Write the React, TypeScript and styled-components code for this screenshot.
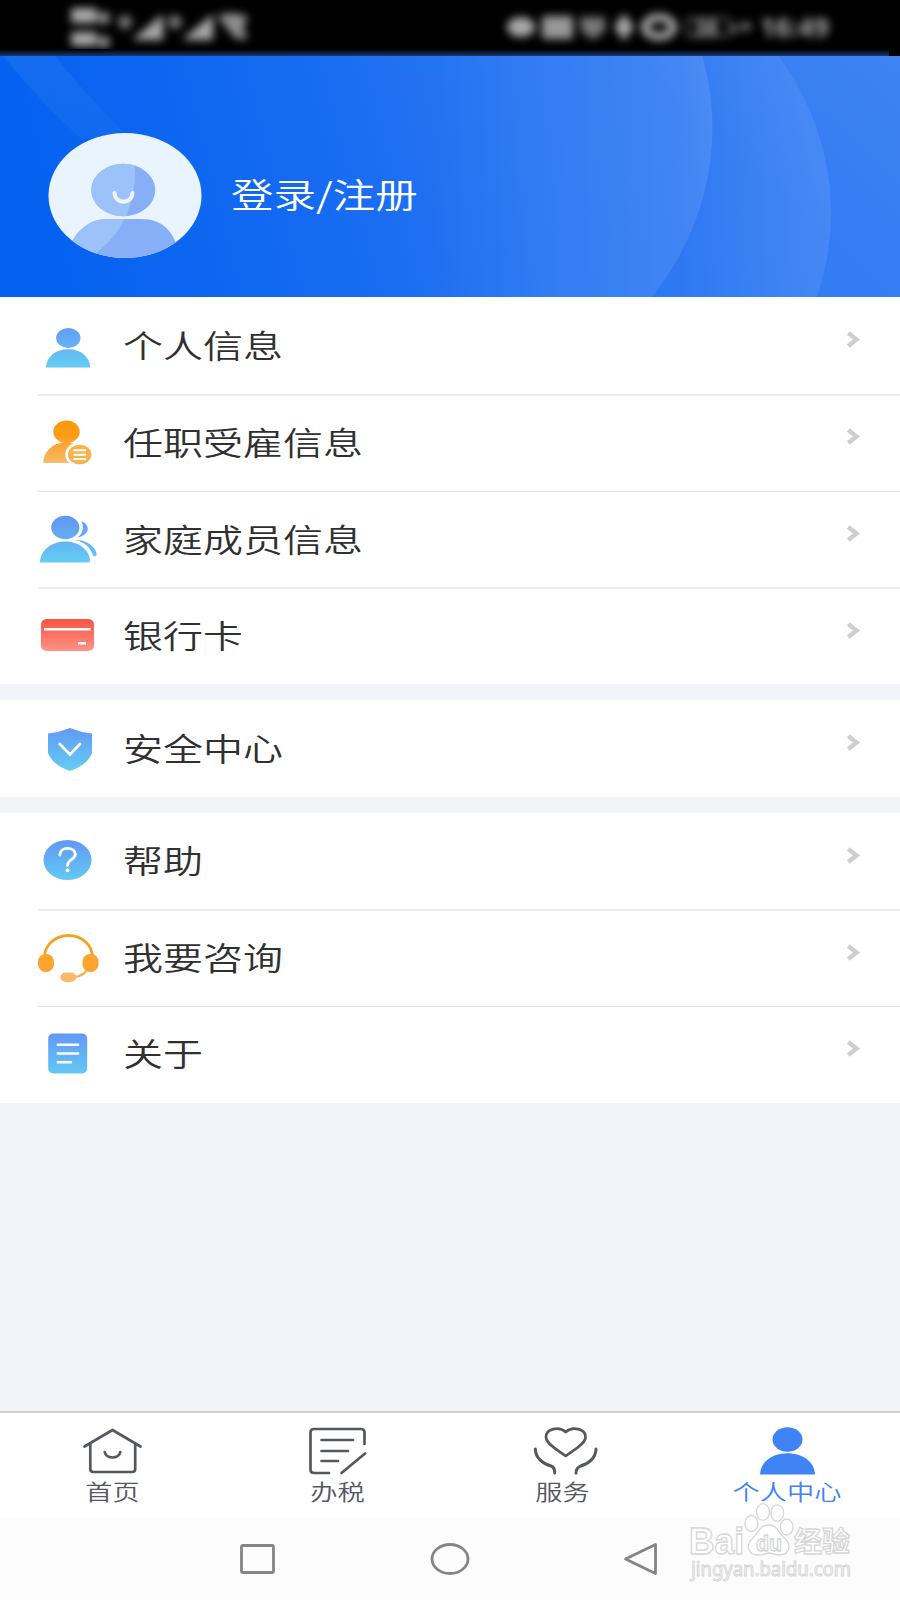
import React from 'react';
import styled, { createGlobalStyle } from 'styled-components';

const GlobalStyle = createGlobalStyle`
  * { box-sizing: border-box; }
  body {
    margin: 0;
    font-family: "Noto Sans CJK SC", "Noto Sans", sans-serif;
    font-weight: 350;
  }
  svg { display: block; flex: none; }
`;

const Screen = styled.div`
  position: relative;
  display: flex;
  flex-direction: column;
  width: 900px;
  height: 1600px;
  overflow: hidden;
  background: #f3f4f9;
`;

const StatusBar = styled.header`
  height: 56px;
  background: #000;
`;

const Hero = styled.section`
  position: relative;
  display: flex;
  align-items: flex-start;
  height: 241px;
  padding: 76px 0 0 48px;
  background: #0562f0;
`;

const HeroBackdrop = styled.svg`
  position: absolute;
  inset: 0;
`;

const Avatar = styled.svg`
  position: relative;
`;

const LoginLink = styled.a`
  position: relative;
  margin: 37px 0 0 29px;
  font-size: 34px;
  line-height: 50px;
  color: #fff;
  white-space: nowrap;
  transform: scaleX(1.25);
  transform-origin: left center;
`;

const Section = styled.section`
  margin-bottom: 16px;
  background: #fff;
`;

const Row = styled.div<{ $height: number }>`
  display: flex;
  align-items: flex-start;
  height: ${(p) => p.$height}px;
  padding-left: 35px;
`;

const Divider = styled.hr<{ $thin?: boolean }>`
  height: ${(p) => (p.$thin ? 1 : 2)}px;
  margin: 0 0 0 38px;
  border: 0;
  background: ${(p) => (p.$thin ? '#e4e4e6' : '#ededee')};
`;

const RowLabel = styled.span<{ $top: number }>`
  flex: 1;
  margin-left: 18px;
  padding-top: ${(p) => p.$top}px;
  font-size: 31.5px;
  line-height: 46px;
  color: #303030;
  white-space: nowrap;
  transform: scaleX(1.27);
  transform-origin: left center;
`;

const Chevron = styled.svg<{ $top: number }>`
  margin: ${(p) => p.$top}px 39px 0 0;
`;

const TabBar = styled.nav`
  display: grid;
  grid-template-columns: repeat(4, 1fr);
  height: 106px;
  margin-top: auto;
  border-top: 2px solid #d0d2d8;
  background: #fff;
`;

const Tab = styled.a<{ $active?: boolean }>`
  display: flex;
  flex-direction: column;
  align-items: center;
  padding-top: 11px;
  color: ${(p) => (p.$active ? '#3f83f5' : '#555763')};
`;

const TabLabel = styled.span`
  font-size: 21.5px;
  line-height: 30px;
  white-space: nowrap;
  transform: scaleX(1.265);
`;

const SystemNav = styled.footer`
  display: flex;
  align-items: center;
  gap: 152px;
  height: 83px;
  padding-left: 238px;
  background: #fcfcfc;
`;

const Watermark = styled.svg`
  position: absolute;
  left: 680px;
  top: 1495px;
`;

const Sky = 'url(#sky)';
const Amber = 'url(#amber)';

const Gradients = () => (
  <svg width="0" height="0" style={{ position: 'absolute' }}>
    <defs>
      <linearGradient id="sky" gradientUnits="userSpaceOnUse" x1="0" y1="28" x2="0" y2="70">
        <stop offset="0" stopColor="#6299f4" />
        <stop offset="1" stopColor="#63cdf4" />
      </linearGradient>
      <linearGradient id="amber" gradientUnits="userSpaceOnUse" x1="0" y1="26" x2="0" y2="70">
        <stop offset="0" stopColor="#fa9a08" />
        <stop offset="0.3" stopColor="#fa9d14" />
        <stop offset="1" stopColor="#fbbc74" />
      </linearGradient>
      <linearGradient id="coral" x1="0" y1="0" x2="0" y2="1">
        <stop offset="0" stopColor="#fa5444" />
        <stop offset="1" stopColor="#fd9286" />
      </linearGradient>
    </defs>
  </svg>
);

const icons: Record<string, React.ReactNode> = {
  person: (
    <g fill={Sky}>
      <ellipse cx="33.300" cy="41" rx="12.200" ry="10" />
      <path d="M11 70.500C11.500 60 20 52.200 33.200 52.200S54.800 60 55.300 70.500Z" />
    </g>
  ),
  job: (
    <g>
      <ellipse cx="31.500" cy="35.800" rx="13.200" ry="11.400" fill={Amber} />
      <path d="M8.300 67C8.500 55 18 46.500 31.500 46.500C36 46.500 40 47.500 43 49L36 67Z" fill={Amber} />
      <ellipse cx="44.700" cy="58.500" rx="14.400" ry="12.400" fill="#fff" />
      <ellipse cx="44.700" cy="58.500" rx="11.700" ry="9.800" fill="#f9b24e" />
      <path d="M38.500 54.300H51M38.500 58.700H51M38.500 63H51" stroke="#fff" strokeWidth="2" />
    </g>
  ),
  family: (
    <g fill={Sky}>
      <ellipse cx="30.300" cy="35.500" rx="14.100" ry="11.800" />
      <path d="M5 70.500C5 59 16 49.500 30.300 49.500S55 59 55 69Q55 70.500 53.500 70.500Z" />
      <path d="M46.500 29.500C55 32 56 43 42.500 45.500C48.500 41 49 35 46.500 29.500Z" />
      <path d="M41 48.300C52 47 61.500 56 61.700 62.500Q61.500 65 58.500 64.500C56 57 51 50.500 41 48.300Z" />
    </g>
  ),
  card: (
    <g>
      <rect x="6" y="30" width="53" height="32" rx="6" ry="5" fill="url(#coral)" />
      <path d="M9 40.300H55.700M43 54.300H51" stroke="#fff" strokeWidth="2.600" />
    </g>
  ),
  shield: (
    <g>
      <path d="M35 28Q46 32.500 57 33.500V53Q52.500 65 35 71Q17.500 65 13 53V33.500Q24 32.500 35 28Z" fill={Sky} />
      <path d="M24.800 44L35 54.500L45 44" fill="none" stroke="#fff" strokeWidth="2.700" strokeLinecap="round" />
    </g>
  ),
  help: (
    <g>
      <ellipse cx="32.500" cy="47" rx="24" ry="20" fill={Sky} />
      <path d="M24.800 42C25 33 40.300 33.500 40.300 41.500C40.300 46.500 32.500 46.500 32.500 52.500" fill="none" stroke="#fff" strokeWidth="2.900" strokeLinecap="round" />
      <circle cx="32.500" cy="57.300" r="1.900" fill="#fff" />
    </g>
  ),
  headset: (
    <g>
      <path d="M9.500 46A24 21.500 0 0 1 57.500 46" fill="none" stroke="#f3a324" strokeWidth="2.800" />
      <rect x="3" y="43" width="16" height="18" rx="7.500" fill="#fba530" />
      <rect x="47.500" y="43" width="16" height="18" rx="7.500" fill="#fba530" />
      <path d="M40 66Q47 65 52 59.500" fill="none" stroke="#fbae50" strokeWidth="2.400" />
      <rect x="25.300" y="61.500" width="16" height="9.500" rx="5.500" ry="4.700" fill="#fbb96c" />
    </g>
  ),
  note: (
    <g>
      <rect x="13.200" y="26.500" width="39" height="40" rx="5" fill={Sky} />
      <path d="M22.800 37.700H43M22.800 46.500H43M22.800 55.300H36" stroke="#fff" strokeWidth="2.500" strokeLinecap="round" />
    </g>
  ),
};

interface Item {
  icon: string;
  label: string;
  height: number;
  line?: 'thin' | 'thick';
  labelTop: number;
  arrowTop: number;
}

const groups: Item[][] = [
  [
    { icon: 'person', label: '个人信息', height: 97, line: 'thick', labelTop: 24, arrowTop: 34 },
    { icon: 'job', label: '任职受雇信息', height: 95, line: 'thin', labelTop: 22, arrowTop: 32 },
    { icon: 'family', label: '家庭成员信息', height: 95, line: 'thick', labelTop: 23, arrowTop: 33 },
    { icon: 'card', label: '银行卡', height: 95, labelTop: 22, arrowTop: 33 },
  ],
  [{ icon: 'shield', label: '安全中心', height: 97, labelTop: 24, arrowTop: 34 }],
  [
    { icon: 'help', label: '帮助', height: 96, line: 'thick', labelTop: 23, arrowTop: 34 },
    { icon: 'headset', label: '我要咨询', height: 95, line: 'thin', labelTop: 22, arrowTop: 33 },
    { icon: 'note', label: '关于', height: 96, labelTop: 22, arrowTop: 33 },
  ],
];

const MenuRow = ({ item }: { item: Item }) => (
  <>
    <Row $height={item.height}>
      <svg width="70" height="90" viewBox="0 0 70 90">{icons[item.icon]}</svg>
      <RowLabel $top={item.labelTop}>{item.label}</RowLabel>
      <Chevron $top={item.arrowTop} width="15" height="17" viewBox="0 0 15 17">
        <path d="M2.200 2L10.500 8.500L2.200 15" fill="none" stroke="#cdced0" strokeWidth="4.400" />
      </Chevron>
    </Row>
    {item.line && <Divider $thin={item.line === 'thin'} />}
  </>
);

const tabs = [
  {
    label: '首页',
    art: (
      <>
        <path d="M8.500 22.500L36.500 6L64.500 22.500M14.300 20V45Q14.300 48 17.500 48H56Q59.200 48 59.200 45V20" />
        <path d="M28.700 28C30 35.300 43 35.300 44.300 28" />
      </>
    ),
  },
  {
    label: '办税',
    art: (
      <>
        <path d="M63.500 20V8.500Q63.500 5 60 5H13Q9.500 5 9.500 8.500V45.500Q9.500 49 13 49H28M40.500 49L64 29.500" />
        <path d="M20.500 16H52M20.500 27H47M20.500 37H37" />
      </>
    ),
  },
  {
    label: '服务',
    art: (
      <>
        <path d="M39.700 8C33 2 19.500 4.500 20 13.500C20.500 20 31 25.500 39.700 32C48.500 25.500 59 20 59.500 13.500C60 4.500 46.500 2 39.700 8Z" />
        <path d="M9.300 25C9.500 34 17 40 25 42Q29 43.500 28.700 49M70 25C69.800 34 62.500 40 54.500 42Q50 44 50 49" strokeWidth="3" />
      </>
    ),
  },
  {
    label: '个人中心',
    active: true,
    art: (
      <g fill="currentColor" stroke="none">
        <ellipse cx="36.500" cy="15.500" rx="15" ry="12.200" />
        <path d="M9 50.500C9.500 38 21 29.300 36.500 29.300S63.500 38 64 50.500Z" />
      </g>
    ),
  },
];

const StatusIcons = () => (
  <svg width="900" height="56">
    <defs>
      <filter id="smudge" x="-10%" y="-50%" width="120%" height="200%">
        <feGaussianBlur stdDeviation="4" />
      </filter>
      <linearGradient id="edge" x1="0" y1="0" x2="0" y2="1">
        <stop offset="0" stopColor="#000" />
        <stop offset="1" stopColor="#17386f" />
      </linearGradient>
    </defs>
    <g filter="url(#smudge)" fill="#a8a8a8">
      <rect x="71" y="8" width="26" height="15" rx="3" />
      <circle cx="104" cy="18" r="6" opacity=".9" />
      <rect x="71" y="32" width="26" height="14" rx="3" />
      <circle cx="104" cy="42" r="6" opacity=".9" />
      <circle cx="125" cy="22" r="7" opacity=".7" />
      <path d="M132 40L163 14V40Z" />
      <circle cx="175" cy="22" r="7" opacity=".7" />
      <path d="M182 40L213 14V40Z" />
      <path d="M217 16Q232 10 248 17L243 28L248 39H236Z" opacity=".85" />
      <ellipse cx="521" cy="27" rx="14" ry="10" />
      <rect x="542" y="16" width="31" height="23" rx="3" opacity=".9" />
      <path d="M580 17H605V31L593 40L581 31Z" opacity=".7" />
      <path d="M624 13L634 27L624 41L614 27Z" />
      <ellipse cx="659" cy="27" rx="14" ry="9.500" fill="none" stroke="#a8a8a8" strokeWidth="8" />
      <rect x="687" y="18" width="42" height="18" rx="3" fill="none" stroke="#777" strokeWidth="2" />
      <text x="694" y="35" fontSize="21" fontWeight="700" fontFamily="Noto Sans">38</text>
      <text x="731" y="35" fontSize="23" fontWeight="700" fontFamily="Noto Sans">‹+</text>
      <text x="760" y="37" fontSize="26" fontWeight="700" fontFamily="Noto Sans" textLength="69" lengthAdjust="spacingAndGlyphs">16:49</text>
    </g>
    <rect y="49" width="889" height="7" fill="url(#edge)" />
  </svg>
);

export default function App() {
  return (
    <Screen>
      <GlobalStyle />
      <Gradients />
      <StatusBar>
        <StatusIcons />
      </StatusBar>

      <Hero>
        <HeroBackdrop width="900" height="241" viewBox="0 0 900 241">
          <defs>
            <linearGradient id="base" gradientUnits="userSpaceOnUse" x1="60" y1="200" x2="760" y2="20">
              <stop offset="0" stopColor="#0562f0" />
              <stop offset="0.35" stopColor="#156af1" />
              <stop offset="0.65" stopColor="#2976f2" />
              <stop offset="1" stopColor="#337cf3" />
            </linearGradient>
            <linearGradient id="arc" gradientUnits="userSpaceOnUse" x1="430" y1="0" x2="712" y2="0">
              <stop offset="0" stopColor="#fff" stopOpacity="0" />
              <stop offset="1" stopColor="#fff" stopOpacity=".1" />
            </linearGradient>
            <linearGradient id="arc2" gradientUnits="userSpaceOnUse" x1="680" y1="0" x2="831" y2="0">
              <stop offset="0" stopColor="#fff" stopOpacity="0" />
              <stop offset="1" stopColor="#fff" stopOpacity=".09" />
            </linearGradient>
            <linearGradient id="beam" x1="0" y1="0" x2="1" y2="1">
              <stop offset="0" stopColor="#fff" stopOpacity=".06" />
              <stop offset="1" stopColor="#fff" stopOpacity=".03" />
            </linearGradient>
            <linearGradient id="corner" gradientUnits="userSpaceOnUse" x1="780" y1="150" x2="900" y2="20">
              <stop offset="0" stopColor="#fff" stopOpacity="0" />
              <stop offset="1" stopColor="#fff" stopOpacity=".05" />
            </linearGradient>
          </defs>
          <rect width="900" height="241" fill="url(#base)" />
          <rect x="600" width="300" height="241" fill="url(#corner)" />
          <ellipse cx="436" cy="157" rx="395" ry="316" fill="url(#arc2)" />
          <ellipse cx="312.500" cy="72" rx="400" ry="320" fill="url(#arc)" />
          <path d="M3 0H55Q85 38 123 75L82 84Q40 45 3 0Z" fill="url(#beam)" />
        </HeroBackdrop>
        <Avatar width="154" height="126" viewBox="0 0 154 126">
          <defs>
            <clipPath id="disc"><ellipse cx="77" cy="63.500" rx="76.500" ry="62.500" /></clipPath>
            <clipPath id="figure">
              <ellipse cx="75.300" cy="58" rx="32" ry="26.300" />
              <path d="M22 126V114C29 97 43 87 59 87H93C113 87 124 98 129 114V126Z" />
            </clipPath>
          </defs>
          <ellipse cx="77" cy="63.500" rx="76.500" ry="62.500" fill="#e9f4ff" />
          <g clipPath="url(#disc)">
            <g clipPath="url(#figure)">
              <rect width="154" height="126" fill="#87aff7" />
              <path d="M0 0H79Q94 40 81 76Q72 103 48 121L0 126Z" fill="#9dc1f9" />
            </g>
          </g>
          <path d="M66.500 61C67 72.500 84 72.500 84.500 61" fill="none" stroke="#eef7ff" strokeWidth="4" strokeLinecap="round" />
        </Avatar>
        <LoginLink>登录/注册</LoginLink>
      </Hero>

      {groups.map((group) => (
        <Section key={group[0].icon}>
          {group.map((item) => (
            <MenuRow key={item.icon} item={item} />
          ))}
        </Section>
      ))}

      <TabBar>
        {tabs.map((tab) => (
          <Tab key={tab.label} $active={tab.active}>
            <svg width="73" height="52" viewBox="0 0 73 52" fill="none" stroke="currentColor" strokeWidth="2.700" strokeLinecap="round" strokeLinejoin="round">
              {tab.art}
            </svg>
            <TabLabel>{tab.label}</TabLabel>
          </Tab>
        ))}
      </TabBar>

      <SystemNav>
        <svg width="40" height="36" viewBox="0 0 40 36" fill="none" stroke="#858585" strokeWidth="2.800">
          <rect x="3.500" y="4.500" width="32" height="27" rx="1.500" />
        </svg>
        <svg width="40" height="36" viewBox="0 0 40 36" fill="none" stroke="#858585" strokeWidth="2.800">
          <ellipse cx="20" cy="18" rx="18" ry="14.500" />
        </svg>
        <svg width="40" height="36" viewBox="0 0 40 36" fill="none" stroke="#858585" strokeWidth="2.800" strokeLinejoin="round">
          <path d="M3.500 18L33.500 3.500V32.500Z" />
        </svg>
      </SystemNav>

      <Watermark width="180" height="95" viewBox="0 0 180 95" fill="#fff" stroke="#d6d6d6" strokeWidth="1.300" fontFamily="Liberation Sans" fontWeight="700">
        <text x="9" y="59" fontSize="37" textLength="55" lengthAdjust="spacingAndGlyphs">Bai</text>
        <ellipse cx="71.500" cy="28.500" rx="6.500" ry="8" />
        <ellipse cx="83" cy="17" rx="6.400" ry="8.300" />
        <ellipse cx="97.300" cy="18" rx="6.400" ry="8.200" />
        <ellipse cx="106.700" cy="32" rx="6.300" ry="8" />
        <path d="M88.500 30C79 30 79 38 73 43C65 50 68 60 78 60C83 60 86 58 89 58S95 60 99 60C110 60 112 50 104.500 43C98 38 98 30 88.500 30Z" />
        <text x="76" y="55.500" fontSize="22" textLength="26" lengthAdjust="spacingAndGlyphs">du</text>
        <text x="114" y="57" fontSize="28" fontFamily="Noto Sans CJK SC" textLength="56" lengthAdjust="spacingAndGlyphs">经验</text>
        <text x="11" y="80.500" fontSize="19" fontFamily="Noto Sans" fontWeight="400" strokeWidth="1" textLength="160" lengthAdjust="spacingAndGlyphs">jingyan.baidu.com</text>
      </Watermark>
    </Screen>
  );
}
